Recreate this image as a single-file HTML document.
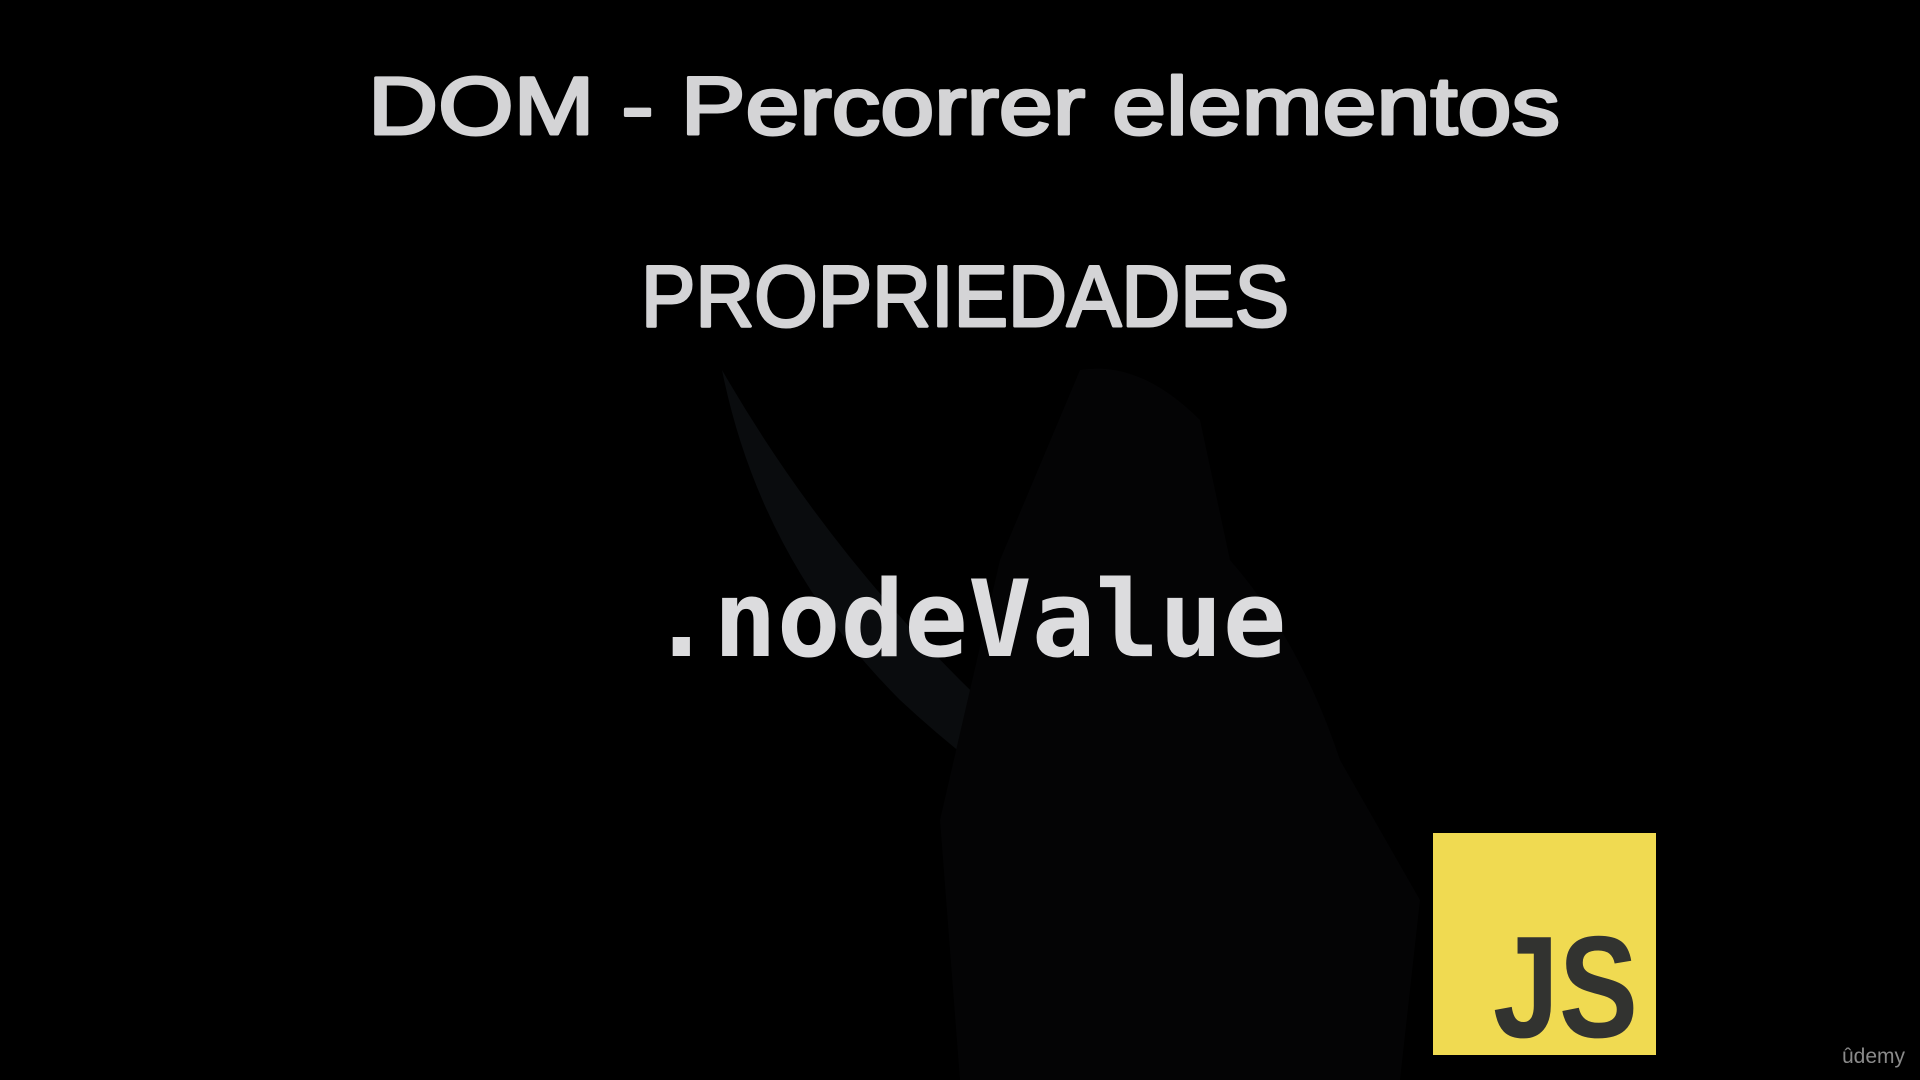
<!DOCTYPE html>
<html><head><meta charset="utf-8"><style>
html,body{margin:0;padding:0;background:#000;width:1920px;height:1080px;overflow:hidden}
svg{position:absolute;left:0;top:0}
</style></head><body>
<svg width="1920" height="1080" viewBox="0 0 1920 1080">
<rect width="1920" height="1080" fill="#000"/>
<path d="M722 370 Q760 560 900 700 Q1050 840 1270 940 L1280 915 Q1080 800 960 680 Q820 540 722 370 Z" fill="#0a0c0e"/>
<path d="M1080 370 Q1140 360 1200 420 L1230 560 Q1300 640 1340 760 L1420 900 L1400 1080 L960 1080 L940 820 L1000 560 Z" fill="#040405"/>
<text x="964" y="134" text-anchor="middle" font-family="Liberation Sans, sans-serif" font-size="82" fill="#d4d4d6" stroke="#d4d4d6" stroke-width="3" stroke-linejoin="round" textLength="1192" lengthAdjust="spacingAndGlyphs">DOM - Percorrer elementos</text>
<text x="965" y="326" text-anchor="middle" font-family="Liberation Sans, sans-serif" font-size="86" fill="#d4d4d6" stroke="#d4d4d6" stroke-width="3" stroke-linejoin="round" textLength="648" lengthAdjust="spacingAndGlyphs">PROPRIEDADES</text>
<text x="968" y="656" text-anchor="middle" font-family="DejaVu Sans Mono, Liberation Mono, monospace" font-weight="bold" font-size="106" fill="#dcdcde" textLength="637" lengthAdjust="spacingAndGlyphs">.nodeValue</text>
<rect x="1433" y="833" width="223" height="222" fill="#f0da51"/>
<text x="1638" y="1037" text-anchor="end" font-family="Liberation Sans, sans-serif" font-weight="bold" font-size="145" fill="#323330" textLength="145" lengthAdjust="spacingAndGlyphs">JS</text>
<text x="1905" y="1063" text-anchor="end" font-family="Liberation Sans, sans-serif" font-size="21" fill="#8a8a8a">ûdemy</text>
</svg>
</body></html>
